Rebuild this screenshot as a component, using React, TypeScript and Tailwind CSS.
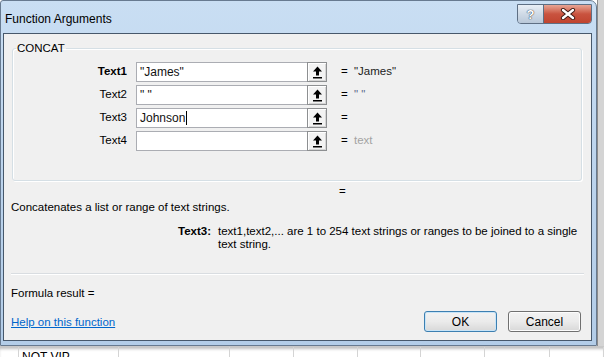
const rows = [
  { label: "Text1", bold: true, input: '"James"', value: '"James"', valueCls: "text-[#1b1b1b]" },
  { label: "Text2", bold: false, input: '" "', value: '" "', valueCls: "text-[#5b6b8b]" },
  { label: "Text3", bold: false, input: "Johnson", value: "", valueCls: "", caret: true },
  { label: "Text4", bold: false, input: "", value: "text", valueCls: "text-[#a3a3a3]" },
];

function RefButton() {
  return (
    <div className="w-[20px] h-[20px] border border-[#8d8f91] bg-[#f3f3f3] shadow-[inset_1px_1px_0_#fff,inset_-1px_-1px_0_#d6d6d6] flex items-center justify-center">
      <svg width="11" height="13" viewBox="0 0 11 13">
        <path d="M5.5 0.5 L1 5.5 H4 V9.5 H7 V5.5 H10 Z" fill="#000" />
        <rect x="1" y="11" width="9" height="1.5" fill="#000" />
      </svg>
    </div>
  );
}

function CaptionButtons() {
  return (
    <div className="ml-auto mt-[3px] flex h-[20px] rounded-b-[4px] border border-[#5e6f84] overflow-hidden">
      <div className="w-[26px] h-full bg-gradient-to-b from-[#e9eff6] via-[#cfdae6] to-[#b9c8d9] border-r border-[#5e6f84] flex items-center justify-center">
        <span className="text-white font-bold text-[13px] leading-none [text-shadow:0_0_1px_#2a3440,0_0_1px_#2a3440]">?</span>
      </div>
      <div className="w-[47px] h-full bg-gradient-to-b from-[#e7a595] via-[#c9533f] to-[#c0442f] flex items-center justify-center">
        <svg width="16" height="12" viewBox="0 0 16 12">
          <path d="M3 2 L13 10 M13 2 L3 10" stroke="#3d1a14" strokeWidth="4.2" strokeLinecap="round" />
          <path d="M3 2 L13 10 M13 2 L3 10" stroke="#fff" strokeWidth="2.4" strokeLinecap="round" />
        </svg>
      </div>
    </div>
  );
}

export default function App() {
  return (
    <div className="w-[604px] h-[357px] overflow-hidden bg-white flex flex-col font-['Liberation_Sans',Arial,sans-serif] text-[11.5px] text-black">
      <div className="flex h-[346px]">
        {/* dialog window */}
        <div className="w-[597px] h-full flex flex-col rounded-tr-[7px] rounded-tl-[3px] border border-[#677a90] bg-gradient-to-b from-[#c9def3] via-[#bcd4ed] to-[#b3cde8]">
          <div className="h-[32px] flex pl-[4px] pr-[4px]">
            <span className="mt-[11px] leading-[14px] text-[12px] text-black">Function Arguments</span>
            <CaptionButtons />
          </div>

          <div className="flex-1 ml-[2px] mr-[4px] mb-[4px] border border-[#47586b] bg-[#f0f0f0] flex flex-col">
            <fieldset className="mt-[7px] ml-[8px] mr-[9px] border border-[#d5dfe5] rounded-[3px] shadow-[inset_1px_1px_0_#fff,1px_1px_0_#fff] pt-[7px] pb-[29px]">
              <legend className="ml-[3px] px-[1px] leading-[14px]">CONCAT</legend>
              <div className="flex flex-col gap-[3px]">
                {rows.map((r) => (
                  <div key={r.label} className="flex items-center h-[20px]">
                    <div className={`w-[114px] text-right ${r.bold ? "font-bold" : ""}`}>{r.label}</div>
                    <div className="ml-[9px] w-[171px] h-[20px] border border-r-0 border-[#abadb3] bg-white flex items-center pl-[3px] text-[12px] text-[#111]">
                      {r.input}
                      {r.caret && <span className="ml-[1px] w-[1px] h-[14px] bg-black" />}
                    </div>
                    <RefButton />
                    <span className="ml-[14px] w-[13px]">=</span>
                    <span className={r.valueCls}>{r.value}</span>
                  </div>
                ))}
              </div>
            </fieldset>

            <div className="mt-[3px] pl-[335px] leading-[14px]">=</div>
            <div className="mt-[2px] pl-[7px] leading-[14px]">Concatenates a list or range of text strings.</div>

            <div className="mt-[11px] flex leading-[13px]">
              <span className="ml-[174px] w-[40px] font-bold">Text3:</span>
              <div className="whitespace-nowrap">
                <div>text1,text2,... are 1 to 254 text strings or ranges to be joined to a single</div>
                <div>text string.</div>
              </div>
            </div>

            <div className="mt-[22px] mx-[7px] h-[1px] bg-[#d9dde1] shadow-[0_1px_0_#fff]" />

            <div className="mt-[12px] pl-[7px] leading-[14px]">Formula result =</div>

            <div className="mt-[11px] flex items-center pl-[7px] pr-[10px]">
              <span className="text-[#0066cc] underline leading-[14px]">Help on this function</span>
              <button className="ml-auto w-[73px] h-[21px] rounded-[3px] border border-[#3c7fb1] bg-gradient-to-b from-[#f2f2f2] via-[#ebebeb] to-[#d8d8d8] shadow-[inset_0_0_0_1px_#c8e4f7] text-[12px]">
                OK
              </button>
              <button className="ml-[11px] w-[73px] h-[21px] rounded-[3px] border border-[#707070] bg-gradient-to-b from-[#f2f2f2] via-[#ebebeb] to-[#d8d8d8] shadow-[inset_0_0_0_1px_#fcfcfc] text-[12px]">
                Cancel
              </button>
            </div>
          </div>
        </div>
        {/* excel background to the right */}
        <div className="flex-1 bg-[#d4d4d4] border-l border-[#8c8c8c]" />
      </div>

      {/* excel sheet below the dialog */}
      <div className="h-[11px] flex bg-white border-t border-[#c8c8c8] shadow-[inset_0_3px_3px_-1px_rgba(0,0,0,0.25)]">
        {[19, 100, 111, 64, 64, 63, 64, 65, 54].map((w, i) => (
          <div key={i} style={{ width: w }} className="h-full border-r border-[#d4d4d4] overflow-hidden">
            {i === 1 && <span className="block ml-[3px] mt-[3px] text-[12px] leading-[14px]">NOT VIP</span>}
          </div>
        ))}
      </div>
    </div>
  );
}
